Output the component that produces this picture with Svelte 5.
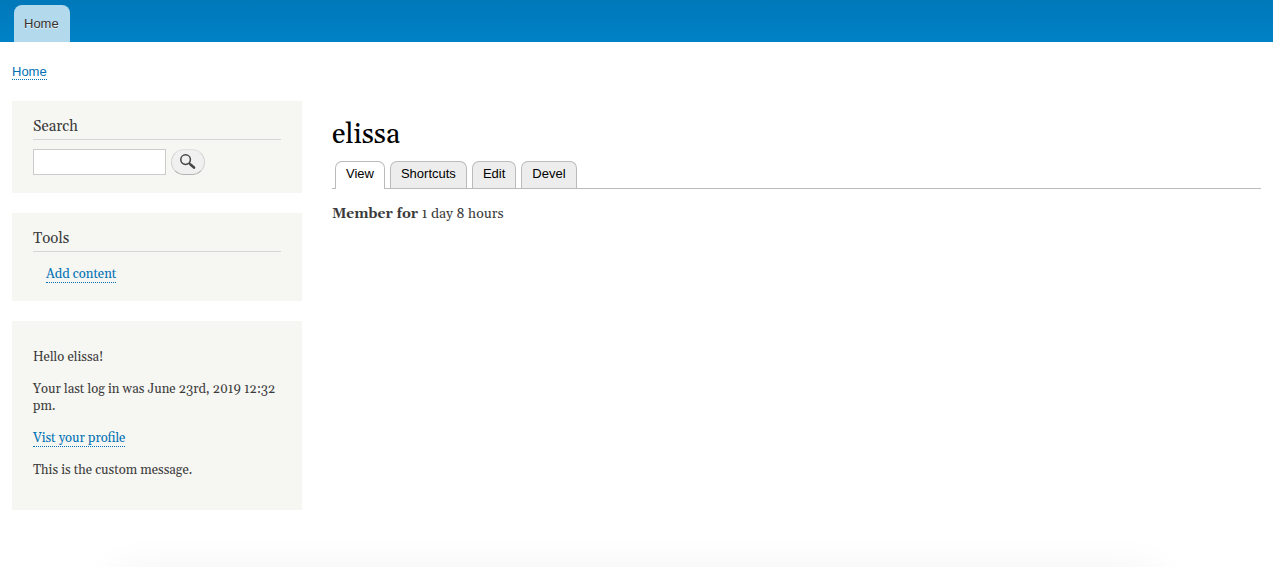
<script>
  const tabs = [
    { label: 'View', active: true },
    { label: 'Shortcuts' },
    { label: 'Edit' },
    { label: 'Devel' }
  ];
</script>

<div class="page">
  <header>
    <nav aria-label="Main navigation">
      <a class="menu-tab" href="#home">Home</a>
    </nav>
  </header>

  <nav class="breadcrumb" aria-label="Breadcrumb">
    <a class="link" href="#home">Home</a>
  </nav>

  <div class="columns">
    <aside>
      <section class="block search">
        <h2>Search</h2>
        <form onsubmit={(e) => e.preventDefault()}>
          <input type="search" aria-label="Search" />
          <button type="submit" aria-label="Search">
            <svg width="16" height="16" viewBox="0 0 16 16" fill="none" stroke="#464646" aria-hidden="true">
              <circle cx="5.6" cy="5.6" r="4.8" stroke-width="1.5" />
              <path d="M9 9 L11 11" stroke-width="1.8" />
              <path d="M10.8 10.8 L14 13.6" stroke-width="2.6" stroke-linecap="round" />
            </svg>
          </button>
        </form>
      </section>

      <section class="block tools">
        <h2>Tools</h2>
        <ul>
          <li><a class="link" href="#add">Add content</a></li>
        </ul>
      </section>

      <section class="block message">
        <p>Hello elissa!</p>
        <p>Your last log in was June 23rd, 2019 12:32 pm.</p>
        <p><a class="link" href="#profile">Vist your profile</a></p>
        <p>This is the custom message.</p>
      </section>
    </aside>

    <main>
      <h1>elissa</h1>
      <nav class="tabs" aria-label="Tabs">
        {#each tabs as tab}
          <a href="#{tab.label.toLowerCase()}" class:active={tab.active} aria-current={tab.active ? 'page' : undefined}>{tab.label}</a>
        {/each}
      </nav>
      <p class="member"><strong>Member for</strong> 1 day 8 hours</p>
    </main>
  </div>

  <div class="page-end"><div class="shade"></div></div>
</div>

<style>
  :global(body) {
    margin: 0;
    background: #fff;
  }
  .page {
    color: #3b3b3b;
    font-family: Georgia, Gelasio, "Liberation Serif", serif;
    font-size: 13px;
    line-height: 17px;
  }
  header {
    background: linear-gradient(#0078ba, #0082c6);
    padding: 5px 14px 0;
  }
  header nav {
    display: flex;
  }
  .menu-tab {
    padding: 0 11px 0 10px;
    border-radius: 8px 8px 0 0;
    background: #b3d9ed;
    color: #333;
    font: 13px/37px "Helvetica Neue", "Liberation Sans", sans-serif;
    text-decoration: none;
    text-shadow: 0 1px #eee;
  }
  .link {
    color: #0071b3;
    text-decoration: none;
    border-bottom: 1px dotted;
  }
  .breadcrumb {
    padding: 21px 12px;
    font: 13px/17px "Helvetica Neue", "Liberation Sans", sans-serif;
  }
  .columns {
    display: flex;
    gap: 30px;
    padding: 0 12px;
  }
  aside {
    flex: 0 0 290px;
    display: flex;
    flex-direction: column;
    gap: 20px;
  }
  .block {
    box-sizing: border-box;
    padding: 17px 21px 18px;
    background: #f6f6f2;
  }
  h2 {
    margin: 0 0 9px;
    padding-bottom: 3px;
    border-bottom: 1px solid #d6d6d6;
    font-size: 15px;
    font-weight: normal;
    line-height: 18px;
  }
  form {
    display: flex;
    gap: 5px;
  }
  input {
    box-sizing: border-box;
    width: 133px;
    height: 26px;
    margin: 0;
    padding: 4px;
    border: 1px solid #ccc;
    border-radius: 0;
    background: #fff;
    appearance: none;
  }
  button {
    box-sizing: border-box;
    display: flex;
    align-items: center;
    justify-content: center;
    width: 34px;
    height: 26px;
    padding: 0;
    border: 1px solid #d2d2d2;
    border-top-color: #e0e0e0;
    border-bottom-color: #b4b4b4;
    border-radius: 13px;
    background: #f0f0f0;
  }
  ul {
    margin: 0;
    padding: 5px 0 0 13px;
    list-style: none;
  }
  .message {
    padding: 28px 21px 31px;
  }
  .message p {
    margin: 0 0 15px;
  }
  .message p:last-child {
    margin: 0;
  }
  main {
    flex: 1;
    min-width: 0;
    padding-top: 18px;
  }
  h1 {
    margin: 0 0 10px;
    color: #000;
    font-size: 28px;
    font-weight: normal;
    line-height: 32px;
  }
  .tabs {
    display: flex;
    gap: 5px;
    padding-left: 3px;
    border-bottom: 1px solid #bbb;
  }
  .tabs a {
    padding: 0 10px 2px;
    border: 1px solid #bbb;
    border-bottom: 0;
    border-radius: 7px 7px 0 0;
    background: #ededed;
    color: #000;
    font: 13px/24px "Helvetica Neue", "Liberation Sans", sans-serif;
    text-decoration: none;
  }
  .tabs .active {
    margin-bottom: -1px;
    padding-bottom: 3px;
    background: #fff;
  }
  .member {
    margin: 15px 0 0;
    font-size: 14px;
    line-height: 20px;
  }
  .page-end {
    display: flex;
    align-items: flex-end;
    height: 57px;
    padding: 0 9%;
    overflow: hidden;
  }
  .shade {
    flex: 1;
    height: 40px;
    margin-bottom: -44px;
    box-shadow: 0 0 40px rgb(0 0 0 / 6%);
  }
</style>
